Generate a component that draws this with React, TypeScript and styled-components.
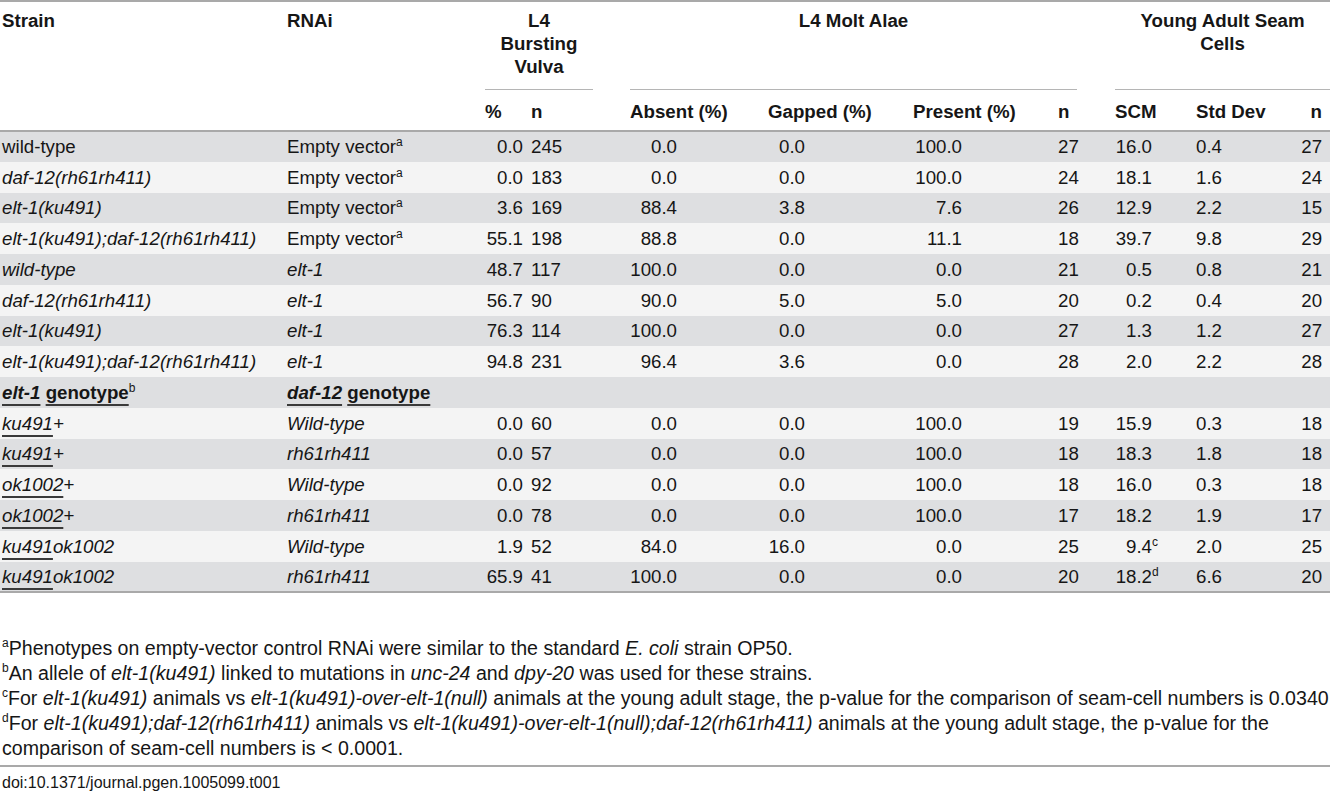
import styled, {createGlobalStyle} from "styled-components";
import type {ReactNode} from "react";

const GlobalStyle = createGlobalStyle`
    html, body {
        margin: 0;
        padding: 0;
        background: #ffffff;
    }
`;

const Page = styled.div`
    width: 1330px;
    font-family: "Liberation Sans", Arial, Helvetica, sans-serif;
    color: #161616;
`;

const Table = styled.table`
    width: 1330px;
    table-layout: fixed;
    border-collapse: collapse;
    border-top: 2px solid #a9a9a9;
    border-bottom: 2px solid #a9a9a9;
    font-size: 18.7px;
`;

const THead = styled.thead`
    border-bottom: 2px solid #a9a9a9;
`;

const TopTh = styled.th`
    vertical-align: top;
    text-align: left;
    font-weight: bold;
    line-height: 23px;
    padding: 7px 0 0 2px;
`;

const GroupLabel = styled.div<{ $trim: number }>`
    height: 80px;
    margin-right: ${p => p.$trim}px;
    text-align: center;
    border-bottom: 1.5px solid #b5b5b5;
`;

const SubTh = styled.th<{ $right?: boolean }>`
    text-align: ${p => (p.$right ? "right" : "left")};
    font-weight: bold;
    line-height: 23px;
    padding: 10px ${p => (p.$right ? "8px" : "0")} 7px 2px;
`;

const Row = styled.tr<{ $shade?: boolean }>`
    height: 30.75px;
    background: ${p => (p.$shade ? "#dedfe1" : "#f4f4f4")};
`;

const Cell = styled.td<{ $right?: boolean }>`
    padding: 1px ${p => (p.$right ? "8px" : "0")} 0 2px;
    line-height: 22px;
    vertical-align: middle;
    white-space: nowrap;
    text-align: ${p => (p.$right ? "right" : "left")};
`;

const NumBox = styled.span<{ $w: number }>`
    display: inline-block;
    width: ${p => p.$w}px;
    text-align: right;
`;

const Sup = styled.sup`
    font-size: 12px;
    font-style: normal;
    font-weight: normal;
    line-height: 0;
    vertical-align: 7px;
`;

const I = styled.i`
    font-style: italic;
`;

const B = styled.b`
    font-weight: bold;
`;

const U = styled.span`
    text-decoration: underline;
    text-decoration-thickness: 1.5px;
    text-underline-offset: 5px;
    text-decoration-color: #3a3a3a;
`;

const Footnotes = styled.div`
    padding: 43px 0 4px 2px;
    font-family: "Liberation Sans Narrow", "Arial Narrow", "Liberation Sans", sans-serif;
    font-size: 19.6px;
    line-height: 25px;
    border-bottom: 2px solid #a9a9a9;
`;

const Note = styled.p`
    margin: 0;
`;

const NoteMark = styled.span`
    display: inline-block;
    height: 0;
    font-size: 12px;
    line-height: 0;
    vertical-align: 8px;
`;

const Doi = styled.div`
    padding: 5px 0 0 2px;
    font-family: "Liberation Sans Narrow", "Arial Narrow", "Liberation Sans", sans-serif;
    font-size: 16px;
    line-height: 22px;
`;

interface Column {
    width: number;
    box?: number;
    right?: boolean;
}

// content widths picked so each column starts where the printed table has it
const columns: Column[] = [
    {width: 285},
    {width: 198},
    {width: 46, box: 38},
    {width: 99},
    {width: 138, box: 47},
    {width: 145, box: 37},
    {width: 145, box: 49},
    {width: 57},
    {width: 81, box: 37},
    {width: 96},
    {width: 40, right: true},
];

type Value = string | [string, string];

interface DataRow {
    strain: ReactNode;
    rnai: ReactNode;
    values: Value[];
}

const ev = <>Empty vector<Sup>a</Sup></>;
const eltRnai = <I>elt-1</I>;

const rows: DataRow[] = [
    {strain: "wild-type", rnai: ev, values: ["0.0", "245", "0.0", "0.0", "100.0", "27", "16.0", "0.4", "27"]},
    {strain: <I>daf-12(rh61rh411)</I>, rnai: ev, values: ["0.0", "183", "0.0", "0.0", "100.0", "24", "18.1", "1.6", "24"]},
    {strain: <I>elt-1(ku491)</I>, rnai: ev, values: ["3.6", "169", "88.4", "3.8", "7.6", "26", "12.9", "2.2", "15"]},
    {strain: <I>elt-1(ku491);daf-12(rh61rh411)</I>, rnai: ev, values: ["55.1", "198", "88.8", "0.0", "11.1", "18", "39.7", "9.8", "29"]},
    {strain: <I>wild-type</I>, rnai: eltRnai, values: ["48.7", "117", "100.0", "0.0", "0.0", "21", "0.5", "0.8", "21"]},
    {strain: <I>daf-12(rh61rh411)</I>, rnai: eltRnai, values: ["56.7", "90", "90.0", "5.0", "5.0", "20", "0.2", "0.4", "20"]},
    {strain: <I>elt-1(ku491)</I>, rnai: eltRnai, values: ["76.3", "114", "100.0", "0.0", "0.0", "27", "1.3", "1.2", "27"]},
    {strain: <I>elt-1(ku491);daf-12(rh61rh411)</I>, rnai: eltRnai, values: ["94.8", "231", "96.4", "3.6", "0.0", "28", "2.0", "2.2", "28"]},
];

const ku = <I><U>ku491</U>+</I>;
const ok = <I><U>ok1002</U>+</I>;
const kuOk = <I><U>ku491</U>ok1002</I>;
const wt = <I>Wild-type</I>;
const rh = <I>rh61rh411</I>;

const genotypeRows: DataRow[] = [
    {strain: ku, rnai: wt, values: ["0.0", "60", "0.0", "0.0", "100.0", "19", "15.9", "0.3", "18"]},
    {strain: ku, rnai: rh, values: ["0.0", "57", "0.0", "0.0", "100.0", "18", "18.3", "1.8", "18"]},
    {strain: ok, rnai: wt, values: ["0.0", "92", "0.0", "0.0", "100.0", "18", "16.0", "0.3", "18"]},
    {strain: ok, rnai: rh, values: ["0.0", "78", "0.0", "0.0", "100.0", "17", "18.2", "1.9", "17"]},
    {strain: kuOk, rnai: wt, values: ["1.9", "52", "84.0", "16.0", "0.0", "25", ["9.4", "c"], "2.0", "25"]},
    {strain: kuOk, rnai: rh, values: ["65.9", "41", "100.0", "0.0", "0.0", "20", ["18.2", "d"], "6.6", "20"]},
];

function ValueCell({value, col}: {value: Value; col: Column}) {
    const [text, mark] = typeof value === "string" ? [value, null] : value;
    return (
        <Cell $right={col.right}>
            {col.box ? <NumBox $w={col.box}>{text}</NumBox> : text}
            {mark && <Sup>{mark}</Sup>}
        </Cell>
    );
}

function BodyRow({row, index}: {row: DataRow; index: number}) {
    return (
        <Row $shade={index % 2 === 0}>
            <Cell>{row.strain}</Cell>
            <Cell>{row.rnai}</Cell>
            {row.values.map((v, i) => (
                <ValueCell key={i} value={v} col={columns[i + 2]} />
            ))}
        </Row>
    );
}

export default function App() {
    const subHeads = ["%", "n", "Absent (%)", "Gapped (%)", "Present (%)", "n", "SCM", "Std Dev", "n"];

    return (
        <Page>
            <GlobalStyle />
            <Table>
                <colgroup>
                    {columns.map((c, i) => <col key={i} style={{width: c.width}} />)}
                </colgroup>
                <THead>
                    <tr>
                        <TopTh rowSpan={2}>Strain</TopTh>
                        <TopTh rowSpan={2}>RNAi</TopTh>
                        <TopTh colSpan={2}>
                            <GroupLabel $trim={35}>L4<br />Bursting<br />Vulva</GroupLabel>
                        </TopTh>
                        <TopTh colSpan={4}>
                            <GroupLabel $trim={36}>L4 Molt Alae</GroupLabel>
                        </TopTh>
                        <TopTh colSpan={3}>
                            <GroupLabel $trim={0}>Young Adult Seam<br />Cells</GroupLabel>
                        </TopTh>
                    </tr>
                    <tr>
                        {subHeads.map((h, i) => (
                            <SubTh key={i} $right={columns[i + 2].right}>{h}</SubTh>
                        ))}
                    </tr>
                </THead>
                <tbody>
                    {rows.map((r, i) => <BodyRow key={i} row={r} index={i} />)}
                    <Row $shade>
                        <Cell><B><I><U>elt-1</U></I> <U>genotype</U></B><Sup>b</Sup></Cell>
                        <Cell colSpan={10}><B><I><U>daf-12</U></I> <U>genotype</U></B></Cell>
                    </Row>
                    {genotypeRows.map((r, i) => <BodyRow key={i} row={r} index={i + 1} />)}
                </tbody>
            </Table>
            <Footnotes>
                <Note><NoteMark>a</NoteMark>Phenotypes on empty-vector control RNAi were similar to the standard <I>E. coli</I> strain OP50.</Note>
                <Note><NoteMark>b</NoteMark>An allele of <I>elt-1(ku491)</I> linked to mutations in <I>unc-24</I> and <I>dpy-20</I> was used for these strains.</Note>
                <Note><NoteMark>c</NoteMark>For <I>elt-1(ku491)</I> animals vs <I>elt-1(ku491)-over-elt-1(null)</I> animals at the young adult stage, the p-value for the comparison of seam-cell numbers is 0.0340</Note>
                <Note><NoteMark>d</NoteMark>For <I>elt-1(ku491);daf-12(rh61rh411)</I> animals vs <I>elt-1(ku491)-over-elt-1(null);daf-12(rh61rh411)</I> animals at the young adult stage, the p-value for the comparison of seam-cell numbers is &lt; 0.0001.</Note>
            </Footnotes>
            <Doi>doi:10.1371/journal.pgen.1005099.t001</Doi>
        </Page>
    );
}
